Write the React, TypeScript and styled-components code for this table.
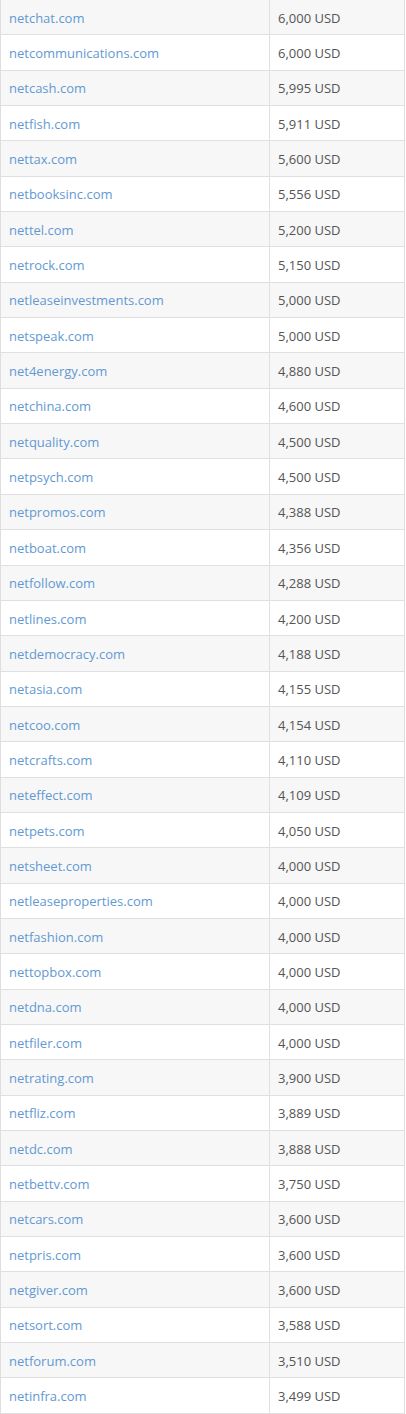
import React from 'react';
import styled, {createGlobalStyle} from 'styled-components';

const GlobalStyle = createGlobalStyle`
  html, body {
    margin: 0;
    padding: 0;
    background: #fff;
  }
  body {
    font-family: 'Open Sans', 'Liberation Sans', Arial, sans-serif;
    font-size: 13px;
  }
`;

const rows: [string, string][] = [
  ['netchat.com', '6,000'],
  ['netcommunications.com', '6,000'],
  ['netcash.com', '5,995'],
  ['netfish.com', '5,911'],
  ['nettax.com', '5,600'],
  ['netbooksinc.com', '5,556'],
  ['nettel.com', '5,200'],
  ['netrock.com', '5,150'],
  ['netleaseinvestments.com', '5,000'],
  ['netspeak.com', '5,000'],
  ['net4energy.com', '4,880'],
  ['netchina.com', '4,600'],
  ['netquality.com', '4,500'],
  ['netpsych.com', '4,500'],
  ['netpromos.com', '4,388'],
  ['netboat.com', '4,356'],
  ['netfollow.com', '4,288'],
  ['netlines.com', '4,200'],
  ['netdemocracy.com', '4,188'],
  ['netasia.com', '4,155'],
  ['netcoo.com', '4,154'],
  ['netcrafts.com', '4,110'],
  ['neteffect.com', '4,109'],
  ['netpets.com', '4,050'],
  ['netsheet.com', '4,000'],
  ['netleaseproperties.com', '4,000'],
  ['netfashion.com', '4,000'],
  ['nettopbox.com', '4,000'],
  ['netdna.com', '4,000'],
  ['netfiler.com', '4,000'],
  ['netrating.com', '3,900'],
  ['netfliz.com', '3,889'],
  ['netdc.com', '3,888'],
  ['netbettv.com', '3,750'],
  ['netcars.com', '3,600'],
  ['netpris.com', '3,600'],
  ['netgiver.com', '3,600'],
  ['netsort.com', '3,588'],
  ['netforum.com', '3,510'],
  ['netinfra.com', '3,499'],
];

const Table = styled.div`
  width: 405px;
  box-sizing: border-box;
  border-left: 1px solid #dedede;
  border-right: 1px solid #dedede;
`;

const Row = styled.div<{striped: boolean}>`
  display: grid;
  grid-template-columns: 269px 1fr;
  height: 35.35px;
  box-sizing: border-box;
  border-bottom: 1px solid #e0e0e0;
  background: ${({striped}) => (striped ? '#f7f7f7' : '#fff')};
`;

const Cell = styled.div<{divider?: boolean}>`
  display: flex;
  align-items: center;
  padding: 1px 8px 0;
  box-sizing: border-box;
  border-right: ${({divider}) => (divider ? '1px solid #e0e0e0' : 'none')};
  white-space: nowrap;
  overflow: hidden;
`;

const DomainLink = styled.a`
  color: #6399d3;
  text-decoration: none;
  font-size: 13px;
`;

const Price = styled.span`
  color: #555;
  font-size: 13px;
`;

export default function App() {
  return (
    <>
      <GlobalStyle />
      <Table>
        {rows.map(([domain, price], i) => (
          <Row key={domain} striped={i % 2 === 0}>
            <Cell divider>
              <DomainLink href="#">{domain}</DomainLink>
            </Cell>
            <Cell>
              <Price>{price} USD</Price>
            </Cell>
          </Row>
        ))}
      </Table>
    </>
  );
}
